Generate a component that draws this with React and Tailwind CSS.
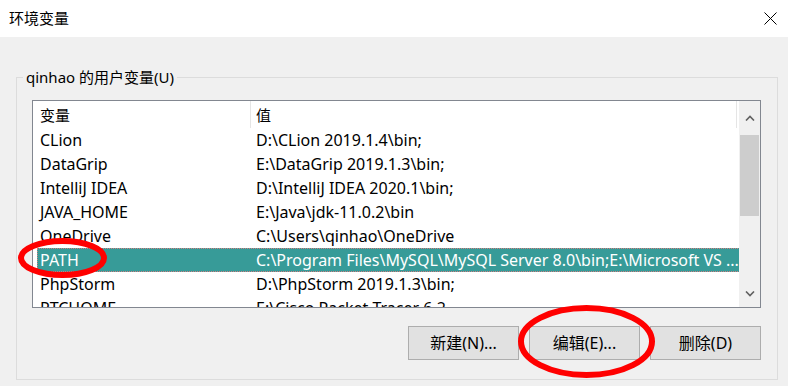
import React from 'react'

const rows = [
  ["CLion", "D:\\CLion 2019.1.4\\bin;"],
  ["DataGrip", "E:\\DataGrip 2019.1.3\\bin;"],
  ["IntelliJ IDEA", "D:\\IntelliJ IDEA 2020.1\\bin;"],
  ["JAVA_HOME", "E:\\Java\\jdk-11.0.2\\bin"],
  ["OneDrive", "C:\\Users\\qinhao\\OneDrive"],
  ["PATH", "C:\\Program Files\\MySQL\\MySQL Server 8.0\\bin;E:\\Microsoft VS ..."],
  ["PhpStorm", "D:\\PhpStorm 2019.1.3\\bin;"],
  ["PTCHOME", "E:\\Cisco Packet Tracer 6.2"],
]

function Chevron({ up }) {
  return (
    <svg width="10" height="6" viewBox="0 0 10 6">
      <path d={up ? "M1 5.5 L5 1.5 L9 5.5" : "M1 0.5 L5 4.5 L9 0.5"} fill="none" stroke="#606060" strokeWidth="1.6" />
    </svg>
  )
}

function VarList() {
  return (
    <div className="flex w-[729px] h-[208px] border border-[#828790] bg-white overflow-hidden">
      <div className="flex-1 flex flex-col overflow-hidden">
        {/* header */}
        <div className="flex h-[27px] shrink-0 items-center text-[15px]">
          <div className="w-[218px] h-full pl-[7px] flex items-center border-r border-[#e5e5e5]">变量</div>
          <div className="w-[486px] h-full pl-[5px] flex items-center border-r border-[#e5e5e5]">值</div>
        </div>
        {rows.map(([name, value], i) => {
          const sel = name === "PATH"
          return (
            <div key={i} className="flex h-[24px] shrink-0 pl-[4px] text-[16px]">
              <div className={sel
                ? "flex flex-1 items-center bg-[#379b98] text-white border border-dotted border-[#d08080]"
                : "flex flex-1 items-center border border-transparent"}>
                <div className="w-[218px] pl-[2px] whitespace-nowrap overflow-hidden">{name}</div>
                <div className="flex-1 whitespace-nowrap overflow-hidden">{value}</div>
              </div>
            </div>
          )
        })}
      </div>
      {/* scrollbar */}
      <div className="w-[21px] shrink-0 bg-[#f0f0f0] flex flex-col items-center">
        <div className="h-[34px] w-full flex items-center justify-center">
          <Chevron up />
        </div>
        <div className="h-[81px] w-[19px] bg-[#cdcdcd]" />
        <div className="flex-1" />
        <div className="h-[26px] w-full flex items-center justify-center">
          <Chevron />
        </div>
      </div>
    </div>
  )
}

function Btn({ children }) {
  return (
    <button className="w-[111px] h-[34px] bg-[#e1e1e1] border border-[#adadad] flex items-center justify-center text-black text-[16px]">
      {children}
    </button>
  )
}

export default function App() {
  return (
    <div
      className="relative w-[788px] h-[386px] bg-[#f0f0f0] flex flex-col overflow-hidden text-[15px] leading-[20px] text-black"
      style={{ fontFamily: '"Noto Sans", "Noto Sans CJK SC", sans-serif' }}
    >
      {/* title bar */}
      <div className="h-[37px] bg-white flex items-center justify-between pl-[9px] pr-[11px] shrink-0">
        <span className="pb-[1px]">环境变量</span>
        <svg width="13" height="13" viewBox="0 0 13 13">
          <path d="M0.5 0.5 L12.5 12.5 M12.5 0.5 L0.5 12.5" stroke="#000" strokeWidth="1" />
        </svg>
      </div>

      {/* group box */}
      <div className="relative mt-[40px] ml-[16px] w-[762px] h-[303px] border border-[#dcdcdc] pt-[22px] pl-[15px] flex flex-col">
        <div className="absolute left-[6px] -top-[11px] px-[3px] bg-[#f0f0f0] h-[20px] flex items-center">
          qinhao 的用户变量(U)
        </div>
        <VarList />
        <div className="flex justify-end gap-[10px] w-[729px] mt-[18px]">
          <Btn>新建(N)...</Btn>
          <Btn>编辑(E)...</Btn>
          <Btn>删除(D)</Btn>
        </div>
      </div>

      {/* red annotation ellipses */}
      <svg className="absolute left-0 top-0 pointer-events-none" width="788" height="386" viewBox="0 0 788 386">
        <ellipse cx="62.5" cy="258" rx="41.5" ry="17" fill="none" stroke="#ff0000" strokeWidth="6" />
        <ellipse cx="586.5" cy="341.5" rx="65.5" ry="33.5" fill="none" stroke="#ff0000" strokeWidth="6" />
      </svg>
    </div>
  )
}
